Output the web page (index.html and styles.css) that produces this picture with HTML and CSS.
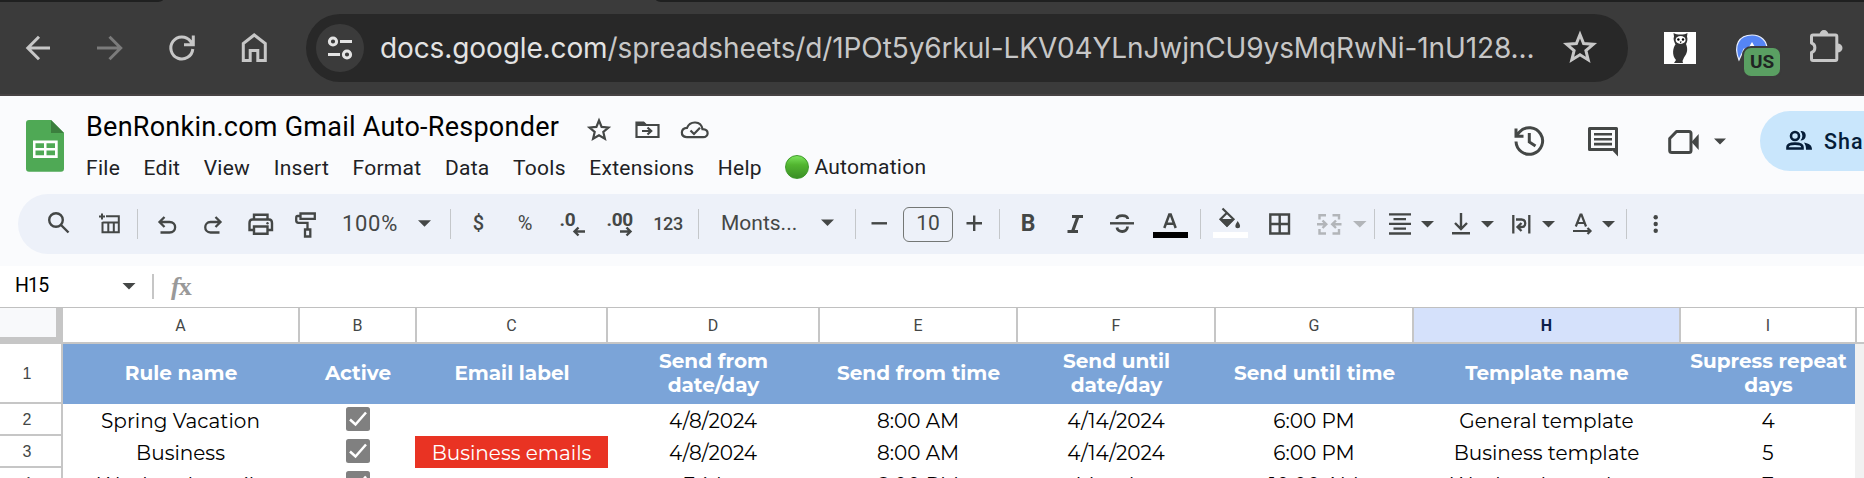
FILE: index.html
```html
<!DOCTYPE html>
<html lang="en">
<head>
<meta charset="utf-8">
<title>BenRonkin.com Gmail Auto-Responder</title>
<link rel="stylesheet" href="styles.css">
</head>
<body>
<header class="browser">
  <div class="tabstrip"><i class="tab-left"></i><i class="tab-right"></i></div>
  <nav class="nav">
    <svg width="72" height="94" viewBox="2 1 72 94"><path class="lt" d="M50 48H28M39 36.8 27.8 48 39 59.2"/></svg>
    <svg width="72" height="94" viewBox="74 1 72 94"><path class="lt dim" d="M97 48h23M109.500 36.800 120.700 48 109.500 59.200"/></svg>
    <svg width="72" height="94" viewBox="146 1 72 94"><path class="lt" d="M192.800 49A11 11 0 1 1 190.500 41.200L193 44.500M193.300 35.500V44.700H184"/></svg>
    <svg width="72" height="94" viewBox="218 1 72 94"><path class="lt" d="M243.300 60.500V43.500L254.200 35 265.300 43.500V60.500H257.800V50.500H250.200V60.500Z"/></svg>
    <div class="omnibox">
      <span class="site"><svg width="48" height="48" viewBox="316 24 48 48"><g fill="none" stroke="#e3e3e3" stroke-width="3"><circle cx="333" cy="41.500" r="3.600"/><path d="M340 41.500H352M328 54.500H340"/><circle cx="347" cy="54.500" r="3.600"/></g></svg></span>
      <span class="url"><b>docs.google.com</b>/spreadsheets/d/1POt5y6rkul-LKV04YLnJwjnCU9ysMqRwNi-1nU128...</span>
      <svg width="36" height="36" viewBox="1562 30 36 36"><path class="lt" d="M1580 34.500 1583.600 43.500 1593.300 44.300 1585.900 50.500 1588.200 59.900 1580 54.800 1571.800 59.900 1574.100 50.500 1566.700 44.300 1576.400 43.500Z"/></svg>
    </div>
    <div class="extensions">
      <svg width="72" height="94" viewBox="1644 1 72 94"><path fill="#fff" d="M1664 32h32v32h-32z"/><path fill="#333" d="M1673.500 33c2 1.500 4 1.500 7 1.500s5 0 7-1.500l-.5 3.500c1 3 0 5.500-1 7.500 2 5 1.500 9-2 13.500l-1.500 3.500.5 2h-9l2-3c-4.500-5-3-12.500-.5-15.500-1.500-3-2.500-5.500-1.500-8z"/><ellipse cx="1680.600" cy="40" rx="5" ry="3.900" fill="#fff"/><circle cx="1678.400" cy="39.500" r="1.200"/><circle cx="1683" cy="39.500" r="1.200"/><path d="M1679.700 41.500h2l-1 2z"/></svg>
      <span class="vpn"><svg width="72" height="94" viewBox="1716 1 72 94"><path fill="#5585f5" stroke="#e8eefc" stroke-width="1.200" d="M1739 60c-6-15 0-25 13-25 9 0 15 6 15 14H1744z"/><path fill="#fff" d="M1752 42l3 5h-6z"/></svg><span class="badge">US</span></span>
      <svg width="72" height="94" viewBox="1788 1 72 94"><path class="lt" stroke-linejoin="round" d="M1813 35H1835.500Q1836.800 35 1836.800 36.500V59Q1836.800 60.500 1835.500 60.500H1813Q1811.500 60.500 1811.500 59V52.500C1816 51 1816 44.500 1811.500 43V36.500Q1811.500 35 1813 35Z"/><path fill="#c7c7c7" d="M1819.500 35a4.500 5 0 0 1 9 0zM1837.500 43.500a5 4.500 0 0 1 0 9z"/></svg>
    </div>
  </nav>
</header>

<section class="doc">
  <svg class="logo" width="38" height="52" viewBox="26 120 38 52"><path fill="#4fa955" d="M29 120H51L64 133V168.500Q64 171.800 61 171.800H29Q26 171.800 26 168.500V123Q26 120 29 120Z"/><path fill="#3b7f3e" d="M51 120 64 133H51Z"/><path fill="#fff" fill-rule="evenodd" d="M33 140.500H57.700V158H33ZM35.500 143.200V148H44V143.200ZM46.500 143.200V148H55V143.200ZM35.500 150.500V155.300H44V150.500ZM46.500 150.500V155.300H55V150.500Z"/></svg>
  <div class="doc-main">
    <div class="title-row">
      <h1>BenRonkin.com Gmail Auto-Responder</h1>
      <svg width="134" height="32" viewBox="580 112 134 32"><g class="st" stroke-width="2.200"><path d="M599 120.500 601.600 126.900 608.500 127.500 603.300 132 604.900 138.700 599 135.200 593.100 138.700 594.700 132 589.500 127.500 596.400 126.900Z"/><path d="M636.500 136V122.500H643.500L646 125H658.500V137H636.500ZM642 131H651M647.500 127.500 651.200 131 647.500 134.500"/><path d="M636 122H644L647 126H636Z" fill="#444746" stroke="none"/><path d="M686.500 137.200C680 136.500 680.500 128 687 127.800 690 120.500 701 120.500 702.500 129.200 709.500 129.500 709 137 703 137.200H686.500M690.500 130.500 694 134 700 127.800"/></g></svg>
    </div>
    <div class="menus">
      <span>File</span><span>Edit</span><span>View</span><span>Insert</span><span>Format</span><span>Data</span><span>Tools</span><span>Extensions</span><span>Help</span><span class="auto"><i class="ball"></i><span>Automation</span></span>
    </div>
  </div>
  <div class="actions">
    <svg width="240" height="60" viewBox="1500 111 240 60"><g class="st" stroke-width="3"><path d="M1516 141.500A13.300 13.300 0 1 0 1519.500 132L1516 136M1516 128.500V136.300H1523.500M1529.300 133V142L1535.500 146"/><path stroke-linejoin="round" d="M1616.500 152.500V128.500H1589.500V149.500H1612.500"/><path d="M1594 134.300H1612M1594 139.200H1612M1594 144.100H1612" stroke-width="2.600"/><path stroke-linejoin="round" d="M1676.500 131.500H1689Q1691 131.500 1691 133.500V150.500Q1691 152.500 1689 152.500H1672Q1669.700 152.500 1669.700 150.500V138.500Z"/></g><path fill="#444746" d="M1610 148H1618V156.500ZM1691.500 142 1698.700 134V150ZM1714 138.500H1726L1720 144.500Z"/></svg>
    <div class="share"><svg width="28" height="24" viewBox="1785 129 28 24"><g fill="none" stroke="#061d38" stroke-width="2.600"><circle cx="1795" cy="136" r="4"/><path d="M1787.500 148.500V147C1787.500 142.500 1802.500 142.500 1802.500 147V148.500Z"/></g><path fill="#061d38" d="M1800.500 131.200c7-1.500 7 10 0 9.200 2.500-3 2.500-6 0-9.200zM1804 142.500c5 1 8 2.500 8 7.200h-6c0-3-.5-5-2-7.200z"/></svg><span>Share</span></div>
  </div>
</section>

<section class="toolbar">
  <svg width="66" height="60" viewBox="18 194 66 60"><g class="st" stroke-width="2.400"><circle cx="56" cy="220" r="6.800"/><path d="M61 225 68.500 232.500"/></g></svg>
  <svg width="53" height="60" viewBox="84 194 53 60"><g class="st" stroke-width="2"><path d="M106 216.300H118.800V232.300H102.500V222M102.500 222.500H119M108.300 222.500V232M113.800 222.500V232M102 213.500V219.500M99 216.500H105"/></g></svg>
  <i class="sep"></i>
  <svg width="52" height="60" viewBox="138 194 52 60"><path class="st" stroke-width="2.300" d="M160.500 232.500H169.500C177 232.500 177 222 169.500 222H160M164.500 217 159.500 222 164.500 227"/></svg>
  <svg width="45" height="60" viewBox="190 194 45 60"><path class="st" stroke-width="2.300" d="M219.500 232.500H210.500C203.500 232.500 203.500 222 210.500 222H220M215.500 217 220.500 222 215.500 227"/></svg>
  <svg width="49" height="60" viewBox="235 194 49 60"><path class="st" stroke-width="2.400" d="M254 219V214.700H267.500V219M254 230H249.500V223Q249.500 219.500 252.500 219.500H269Q272 219.500 272 223V230H267.500M254 226.500H267.500V233.700H254Z"/><circle cx="267.500" cy="223.300" r="1.200" fill="#444746"/></svg>
  <svg width="46" height="60" viewBox="284 194 46 60"><path class="st" stroke-width="2.300" d="M300.500 213.500H314.800V218.800H300.500ZM300.500 216H297.500Q296.200 216 296.200 218V220.500Q296.200 222.800 298.500 222.800H307.500V229M305 229.500H310.300V236.500H305Z"/></svg>
  <span class="cell zoom">100%</span>
  <svg width="40" height="60" viewBox="410 194 40 60"><path class="fl" d="M418 220.300H431L424.500 226.700Z"/></svg>
  <i class="sep"></i>
  <span class="cell dollar">$</span>
  <span class="cell percent">%</span>
  <svg width="52" height="60" viewBox="544 194 52 60"><text class="dec" x="559.500" y="225.500">.0</text><path class="st" stroke-width="2.400" d="M585 231.500H574.500M578.500 227.500 574.500 231.500 578.500 235.500"/></svg>
  <svg width="46" height="60" viewBox="596 194 46 60"><text class="dec" x="606.500" y="225.500">.00</text><path class="st" stroke-width="2.400" d="M620 231.500H630.500M626.500 227.500 630.500 231.500 626.500 235.500"/></svg>
  <span class="cell num">123</span>
  <i class="sep"></i>
  <span class="cell font">Monts...</span>
  <svg width="40" height="60" viewBox="815 194 40 60"><path class="fl" d="M821 219.500H834L827.500 226Z"/></svg>
  <i class="sep"></i>
  <svg width="47" height="60" viewBox="856 194 47 60"><path class="st" stroke-width="2.400" d="M871.500 223.300H887"/></svg>
  <span class="size">10</span>
  <svg width="46" height="60" viewBox="953 194 46 60"><path class="st" stroke-width="2.400" d="M966.500 223.300H982M974.200 215.500V231"/></svg>
  <i class="sep"></i>
  <span class="cell bold">B</span>
  <svg width="50" height="60" viewBox="1050 194 50 60"><path class="st" stroke-width="3.200" d="M1072 216.500H1083M1067.500 231.500H1078M1078 216.500 1072.500 231.500"/></svg>
  <svg width="45" height="60" viewBox="1100 194 45 60"><path class="st" stroke-width="2.400" d="M1110 223.300H1134"/><path class="st" stroke-width="2.800" d="M1116.800 219C1117 214.500 1127.500 214.500 1127.800 219M1117 227.500C1117.500 233 1127.500 233 1127.500 226.500"/></svg>
  <svg width="55" height="60" viewBox="1145 194 55 60"><path class="st" stroke-width="2.500" d="M1164.300 228 1169.300 214.500H1170.700L1175.700 228M1166 223.800H1174"/><path d="M1153 232h35v6h-35z"/></svg>
  <i class="sep"></i>
  <svg width="57" height="60" viewBox="1201 194 57 60"><path class="st" stroke-width="2.200" d="M1222.500 208.500 1233.500 219.200 1227 225.700 1220.500 219.200 1227 212.800"/><path class="fl" d="M1219.500 219H1234.500L1227 227ZM1237.700 221q5 7 0 7.300-5-.3 0-7.300z"/><path fill="#fff" d="M1213 232h35v6h-35z"/></svg>
  <svg width="46" height="60" viewBox="1258 194 46 60"><path class="st" stroke-width="2.400" d="M1270.300 214.500H1289V233.500H1270.300ZM1270 224H1289M1279.700 214.500V233.500"/></svg>
  <svg width="70" height="60" viewBox="1304 194 70 60"><path fill="none" stroke="#b2b5b9" stroke-width="2.400" d="M1326 215.200H1319.500V219.500M1332.500 215.200H1339V219.500M1326 233.500H1319.500V229M1332.500 233.500H1339V229M1317 224.300H1326M1322.500 220.500 1326.300 224.300 1322.500 228M1341.500 224.300H1332.500M1336 220.500 1332.200 224.300 1336 228"/><path fill="#b2b5b9" d="M1353 221H1366.500L1359.800 227.500Z"/></svg>
  <i class="sep"></i>
  <svg width="65" height="60" viewBox="1375 194 65 60"><path class="st" stroke-width="2.300" d="M1389 214.300H1411M1393.500 219.100H1406M1389 223.800H1411M1393.500 228.700H1406M1389 233.500H1411"/><path class="fl" d="M1421 221H1434L1427.500 227.500Z"/></svg>
  <svg width="60" height="60" viewBox="1440 194 60 60"><path class="st" stroke-width="2.400" d="M1461 213V228M1455 223 1461 229 1467 223M1452 233.300H1470"/><path class="fl" d="M1481 221H1494L1487.500 227.500Z"/></svg>
  <svg width="60" height="60" viewBox="1500 194 60 60"><path class="st" stroke-width="2.300" d="M1513.300 215V233.500M1529.300 215V233.500M1516 219.500H1521.500C1526.500 219.500 1526.500 227 1521.500 227H1518.500M1521.500 223 1517.500 227 1521.500 231"/><path class="fl" d="M1542 221H1555L1548.500 227.500Z"/></svg>
  <svg width="66" height="60" viewBox="1560 194 66 60"><path class="st" stroke-width="2.200" d="M1575.800 226.500 1580.500 214.500H1581.500L1586 226.500M1577.500 223H1584.500M1573 231H1590M1587.500 228 1590.500 231 1587.500 234"/><path class="fl" d="M1602 221H1615L1608.500 227.500Z"/></svg>
  <i class="sep"></i>
  <svg width="53" height="60" viewBox="1627 194 53 60"><g fill="#444746"><circle cx="1655.700" cy="217.300" r="2.200"/><circle cx="1655.700" cy="224" r="2.200"/><circle cx="1655.700" cy="230.800" r="2.200"/></g></svg>
</section>

<section class="formula">
  <span class="name-box">H15</span>
  <svg width="40" height="41" viewBox="112 266 40 41"><path class="fl" d="M122.500 283H135.500L129 289.500Z"/></svg>
  <i class="bar"></i>
  <span class="fx"><i>f</i>x</span>
</section>

<main class="sheet">
  <div class="row cols"><div class="corner"></div><div>A</div><div>B</div><div>C</div><div>D</div><div>E</div><div>F</div><div>G</div><div class="sel">H</div><div>I</div><div class="rest"></div></div>
  <div class="row head"><div class="rn">1</div><div>Rule name</div><div>Active</div><div>Email label</div><div>Send from<br>date/day</div><div>Send from time</div><div>Send until<br>date/day</div><div>Send until time</div><div>Template name</div><div>Supress repeat<br>days</div><div class="rest"></div></div>
  <div class="row"><div class="rn">2</div><div>Spring Vacation</div><div class="tick"><svg width="24" height="24" viewBox="0 0 24 24"><rect width="24" height="24" rx="2.500" fill="#808080"/><path fill="none" stroke="#fff" stroke-width="2.500" d="M4 12.500 9.500 17.500 20 5.500"/></svg></div><div></div><div>4/8/2024</div><div>8:00 AM</div><div>4/14/2024</div><div>6:00 PM</div><div>General template</div><div>4</div><div class="rest"></div></div>
  <div class="row"><div class="rn">3</div><div>Business</div><div class="tick"><svg width="24" height="24" viewBox="0 0 24 24"><rect width="24" height="24" rx="2.500" fill="#808080"/><path fill="none" stroke="#fff" stroke-width="2.500" d="M4 12.500 9.500 17.500 20 5.500"/></svg></div><div class="label">Business emails</div><div>4/8/2024</div><div>8:00 AM</div><div>4/14/2024</div><div>6:00 PM</div><div>Business template</div><div>5</div><div class="rest"></div></div>
  <div class="row"><div class="rn">4</div><div>Weekend emails</div><div class="tick"><svg width="24" height="24" viewBox="0 0 24 24"><rect width="24" height="24" rx="2.500" fill="#808080"/><path fill="none" stroke="#fff" stroke-width="2.500" d="M4 12.500 9.500 17.500 20 5.500"/></svg></div><div></div><div>Friday</div><div>8:00 PM</div><div>Monday</div><div>10:00 AM</div><div>Weekend template</div><div>7</div><div class="rest"></div></div>
</main>
</body>
</html>
```
FILE: styles.css
```css
* { box-sizing: border-box; }
html, body { margin: 0; height: 478px; overflow: hidden; }
body { width: 1864px; background: #fafbfd; font-family: "Google Sans", Roboto, sans-serif; color: #202124; display: flex; flex-direction: column; }
svg { display: block; flex: none; }

.browser { height: 96px; flex: none; background: #3b3b3b; border-bottom: 2px solid #474344; }
.tabstrip { height: 2px; display: flex; justify-content: space-between; }
.tab-left { width: 163px; background: #1f2020; border-bottom-right-radius: 8px 2px; }
.tab-right { width: 1208px; background: #1f2020; border-bottom-left-radius: 8px 2px; }
.nav { display: flex; align-items: center; height: 94px; margin-top: -1px; padding-left: 2px; }
.lt { fill: none; stroke: #c7c7c7; stroke-width: 3; }
.dim { stroke: #7b7b7b; }
.omnibox { width: 1322px; height: 68px; margin-left: 16px; margin-right: 16px; padding: 0 30px 0 10px; border-radius: 34px; background: #282828; display: flex; align-items: center; }
.site { border-radius: 50%; background: #3b3b3b; }
.url { flex: 1; margin-left: 16px; font: 28px Inter, sans-serif; letter-spacing: -.11px; color: #c7c7c7; white-space: nowrap; }
.url b { font-weight: 400; color: #e3e3e3; }
.extensions { display: flex; }
.vpn { position: relative; }
.badge { position: absolute; left: 28px; top: 47px; width: 36px; height: 28px; border-radius: 7px; background: #5a9f62; color: #1f2422; font: bold 19px/28px Roboto, sans-serif; text-align: center; box-shadow: 0 0 0 2px #3b3b3b; }

.doc { height: 98px; flex: none; display: flex; padding-left: 26px; }
.logo { margin-top: 24px; }
.doc-main { padding-left: 22px; flex: 1; }
.title-row { display: flex; align-items: center; height: 32px; margin-top: 16px; }
h1 { width: 494px; margin: 0; padding-bottom: 1px; font: 27px/31px "Google Sans", Roboto, sans-serif; letter-spacing: .25px; color: #000; white-space: nowrap; }
.st { fill: none; stroke: #444746; }
.fl { fill: #444746; }
.menus { display: flex; gap: 23.5px; margin-top: 9px; font-size: 21px; line-height: 30px; letter-spacing: .27px; }
.auto { display: flex; align-items: center; gap: 5px; height: 28px; }
.ball { width: 24px; height: 24px; border-radius: 50%; background: linear-gradient(#7be35c, #52b530 40%, #3b8f26); border: 1px solid #3f9a2c; }
.actions { display: flex; margin-top: 15px; }
.share { width: 104px; height: 60px; margin-left: 20px; padding-left: 25px; background: #c9e6fc; border-radius: 30px 0 0 30px; display: flex; align-items: center; gap: 11px; overflow: hidden; font-size: 21.5px; letter-spacing: 1px; font-weight: 500; color: #061d38; }

.toolbar { height: 60px; flex: none; margin-left: 18px; background: #edf1f9; border-radius: 30px 0 0 30px; display: flex; align-items: center; color: #444746; }
.sep { width: 1px; height: 30px; background: #c4c7ca; flex: none; }
.cell { flex: none; text-align: center; line-height: 28px; }
.zoom { width: 80px; font-size: 22px; letter-spacing: .7px; }
.dollar { width: 55px; font-size: 20px; font-weight: 500; line-height: 32px; height: 34px; }
.percent { width: 38px; font-size: 20px; line-height: 32px; height: 34px; }
.num { width: 56px; padding-right: 4px; font-size: 18px; font-weight: 500; letter-spacing: -.4px; }
.font { width: 116px; font-size: 21px; text-align: left; padding-left: 22px; height: 30px; }
.dec { font: bold 19px Roboto, sans-serif; fill: #444746; letter-spacing: -.3px; }
.size { width: 50px; height: 35px; border: 1px solid #747775; border-radius: 6px; text-align: center; font-size: 21px; line-height: 31px; }
.bold { width: 50px; padding-left: 6px; font-size: 23px; font-weight: 700; }

.formula { height: 41px; flex: none; margin-top: 12px; background: #fff; display: flex; align-items: center; }
.name-box { width: 112px; padding: 0 0 2px 15px; font-size: 19.5px; letter-spacing: -.8px; color: #000; }
.bar { width: 2px; height: 25px; background: #c6c6c6; }
.fx { margin-left: 17px; font: bold 26px "Liberation Serif", serif; letter-spacing: -1px; color: #999; }

.sheet { flex: none; border-top: 1px solid #c0c0c0; background: #fff; }
.row { display: grid; grid-template-columns: 63px 237px 117px 191px 212px 198px 198px 198px 267px 176px 7px; height: 32px; font: 20px/24px Montserrat, Inter, sans-serif; color: #000; text-align: center; }
.row > div { display: flex; align-items: center; justify-content: center; white-space: nowrap; padding: 2px 2px 0 0; }
.row > .tick { padding: 0 2px 2px 0; }
.cols { height: 36px; border-bottom: 2px solid #c6c6c6; font: 16px Roboto, sans-serif; color: #444746; }
.cols > div { border-right: 2px solid #c6c6c6; }
.row.cols > div { padding: 0; }
.cols > .corner { background: #f8f9fb; border-right: 7px solid #c6c6c6; border-bottom: 5px solid #c6c6c6; }
.cols > .sel { background: #d5e1fb; color: #0b1d4a; font-weight: 700; }
.head { height: 60px; background: #7ba4d8; color: #fff; font-weight: 700; }
.row.head > div { display: block; align-self: center; padding: 0 1px 2px 0; }
.row.head > .rn, .row > .rn { display: flex; height: 100%; align-self: stretch; padding: 2px 7px 0 0; background: #fff; border-right: 2px solid #c6c6c6; border-bottom: 2px solid #c6c6c6; color: #444746; font: 16px "Liberation Sans", sans-serif; }
.rest { background: #f1f1f1; height: 100%; margin-left: -2px; }
.cols > .rest { border: 0; background: #fff; margin: 0; }
.row > .label { background: #e93323; color: #fff; margin-left: -2px; padding-right: 0; }
```
